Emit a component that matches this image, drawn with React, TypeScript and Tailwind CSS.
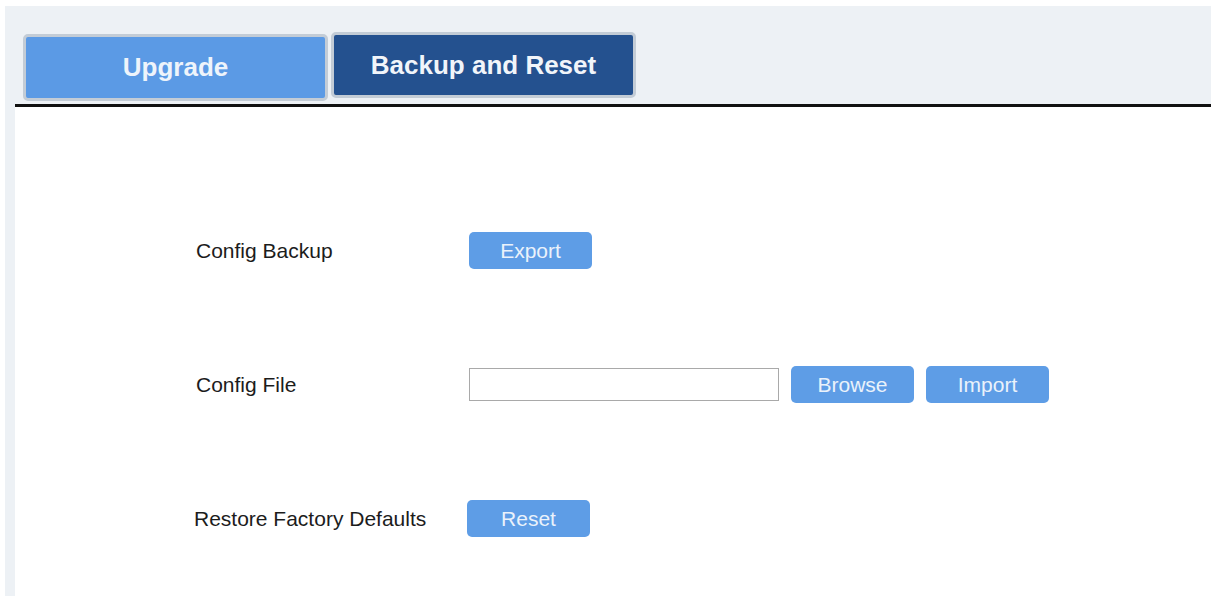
import React from 'react';

const font = { fontFamily: '"Liberation Sans", Arial, sans-serif' };

const ActionButton: React.FC<{ label: string }> = ({ label }) => (
  <button className="h-[37px] w-[123px] rounded-[5px] bg-[#5e9de6] text-[21px] text-[#eaf2fb] leading-none">
    {label}
  </button>
);

const App: React.FC = () => {
  return (
    <div className="w-[1211px] h-[596px] bg-white pt-[6px] pl-[5px] overflow-hidden" style={font}>
      <div className="h-full bg-[#edf1f5] pl-[10px] flex flex-col">
        {/* Tabs */}
        <div className="h-[98px] flex items-end gap-[3px] pl-[8px]">
          <button className="mb-[3px] h-[67px] w-[305px] rounded-[5px] border-[3px] border-[#c3ccd6] bg-[#5b9ae5] text-[26px] font-bold text-[#eef4fb]">
            Upgrade
          </button>
          <button className="mb-[6px] h-[66px] w-[305px] rounded-[5px] border-[3px] border-[#c3ccd6] bg-[#24518f] text-[26px] font-bold text-[#f1f5fa]">
            Backup and Reset
          </button>
        </div>

        {/* Panel */}
        <div className="flex-1 bg-white border-t-[3px] border-[#111]">
          <div className="pt-[125px] flex flex-col gap-[97px] text-[21px] text-[#1c1c1c]">
            <div className="h-[37px] flex items-center pl-[181px]">
              <span className="w-[273px]">Config Backup</span>
              <ActionButton label="Export" />
            </div>

            <div className="h-[37px] flex items-center pl-[181px]">
              <span className="w-[273px]">Config File</span>
              <input
                type="text"
                className="h-[33px] w-[310px] border border-[#a9a9a9] bg-white outline-none"
              />
              <div className="ml-[12px] flex gap-[12px]">
                <ActionButton label="Browse" />
                <ActionButton label="Import" />
              </div>
            </div>

            <div className="h-[37px] flex items-center pl-[179px]">
              <span className="w-[273px]">Restore Factory Defaults</span>
              <ActionButton label="Reset" />
            </div>
          </div>
        </div>
      </div>
    </div>
  );
};

export default App;
